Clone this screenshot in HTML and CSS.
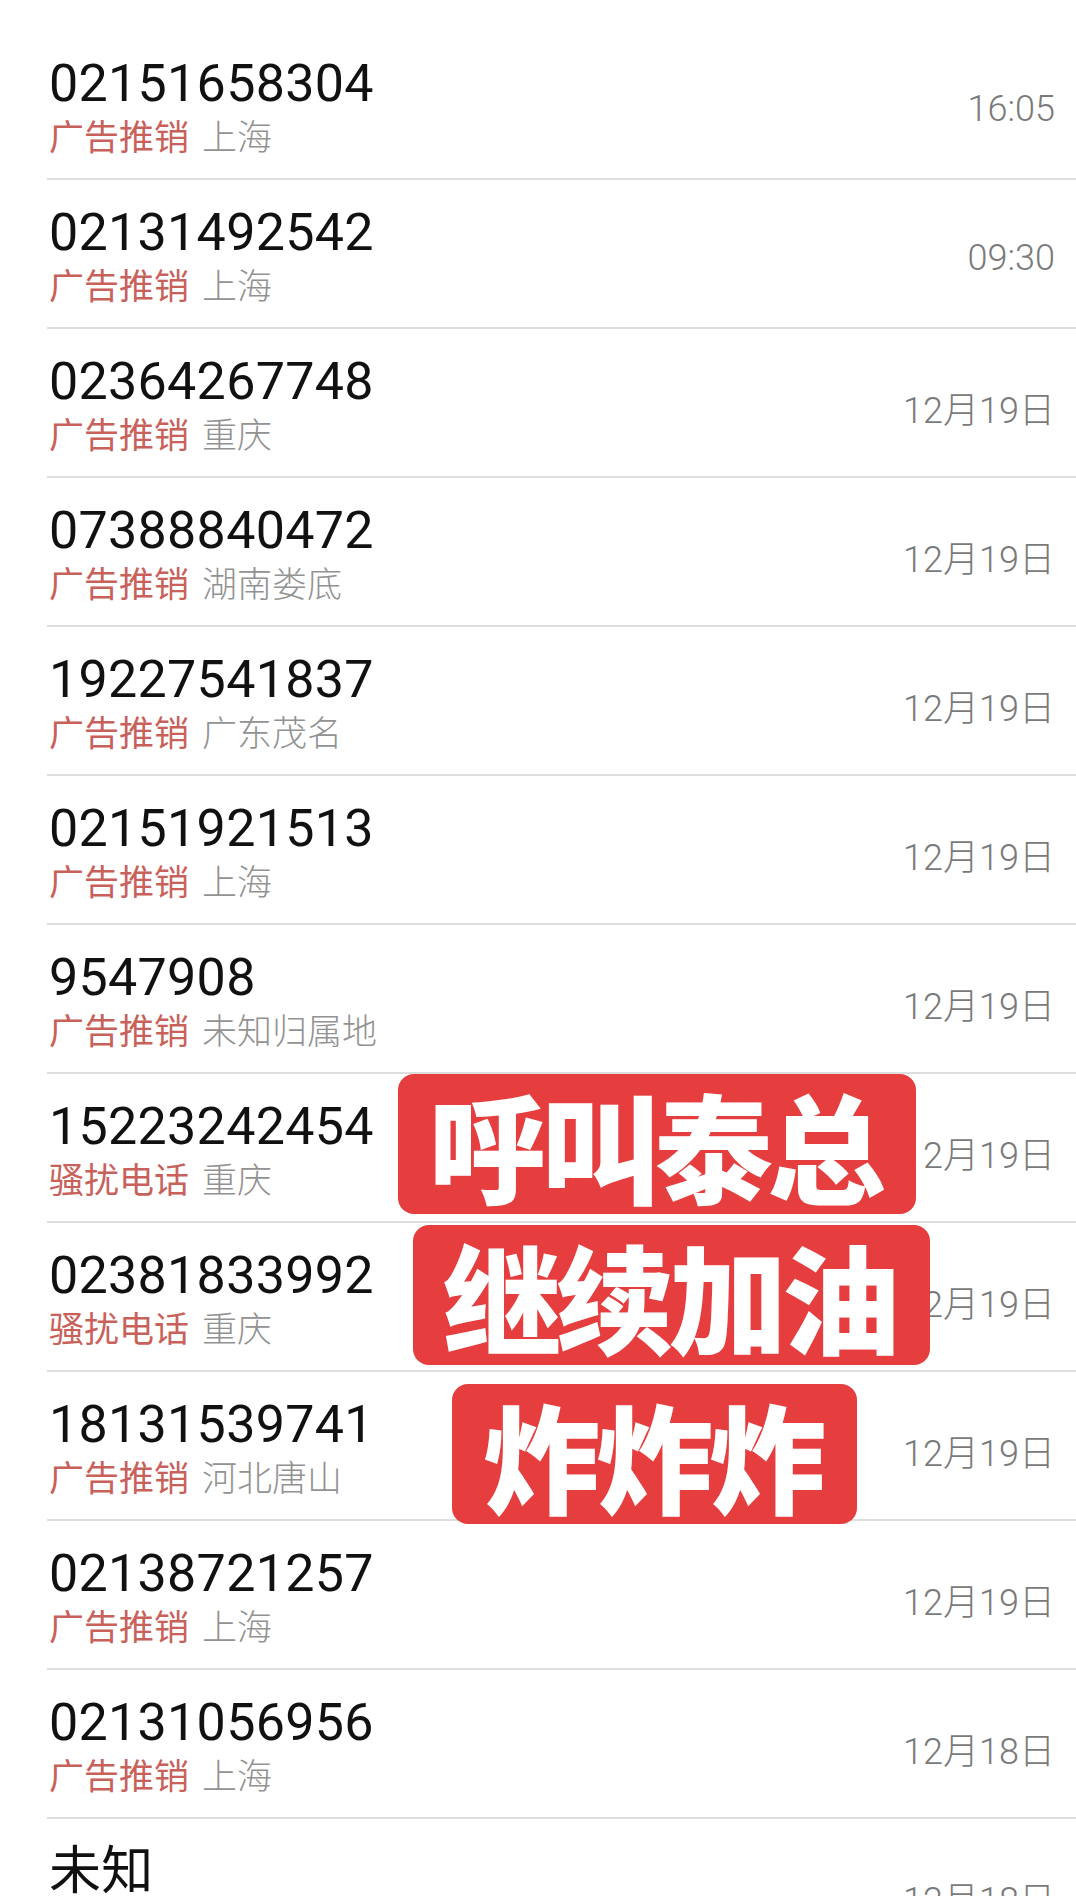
FILE: index.html
```html
<!DOCTYPE html>
<html lang="zh-CN">
<head>
    <meta charset="UTF-8">
    <meta name="viewport" content="width=device-width, initial-scale=1.0">
    <title>骚扰拦截</title>
    <link rel="stylesheet" href="styles.css">
</head>
<body>
    <div id="call-list">
        <div class="call-row">
            <div class="call-info">
                <div class="call-number">02151658304</div>
                <div class="call-sub"><span class="call-tag">广告推销</span><span class="call-place">上海</span></div>
            </div>
            <div class="call-time">16:05</div>
        </div>
        <div class="call-row">
            <div class="call-info">
                <div class="call-number">02131492542</div>
                <div class="call-sub"><span class="call-tag">广告推销</span><span class="call-place">上海</span></div>
            </div>
            <div class="call-time">09:30</div>
        </div>
        <div class="call-row">
            <div class="call-info">
                <div class="call-number">02364267748</div>
                <div class="call-sub"><span class="call-tag">广告推销</span><span class="call-place">重庆</span></div>
            </div>
            <div class="call-time">12月19日</div>
        </div>
        <div class="call-row">
            <div class="call-info">
                <div class="call-number">07388840472</div>
                <div class="call-sub"><span class="call-tag">广告推销</span><span class="call-place">湖南娄底</span></div>
            </div>
            <div class="call-time">12月19日</div>
        </div>
        <div class="call-row">
            <div class="call-info">
                <div class="call-number">19227541837</div>
                <div class="call-sub"><span class="call-tag">广告推销</span><span class="call-place">广东茂名</span></div>
            </div>
            <div class="call-time">12月19日</div>
        </div>
        <div class="call-row">
            <div class="call-info">
                <div class="call-number">02151921513</div>
                <div class="call-sub"><span class="call-tag">广告推销</span><span class="call-place">上海</span></div>
            </div>
            <div class="call-time">12月19日</div>
        </div>
        <div class="call-row">
            <div class="call-info">
                <div class="call-number">9547908</div>
                <div class="call-sub"><span class="call-tag">广告推销</span><span class="call-place">未知归属地</span></div>
            </div>
            <div class="call-time">12月19日</div>
        </div>
        <div class="call-row">
            <div class="call-info">
                <div class="call-number">15223242454</div>
                <div class="call-sub"><span class="call-tag">骚扰电话</span><span class="call-place">重庆</span></div>
            </div>
            <div class="call-time">12月19日</div>
        </div>
        <div class="call-row">
            <div class="call-info">
                <div class="call-number">02381833992</div>
                <div class="call-sub"><span class="call-tag">骚扰电话</span><span class="call-place">重庆</span></div>
            </div>
            <div class="call-time">12月19日</div>
        </div>
        <div class="call-row">
            <div class="call-info">
                <div class="call-number">18131539741</div>
                <div class="call-sub"><span class="call-tag">广告推销</span><span class="call-place">河北唐山</span></div>
            </div>
            <div class="call-time">12月19日</div>
        </div>
        <div class="call-row">
            <div class="call-info">
                <div class="call-number">02138721257</div>
                <div class="call-sub"><span class="call-tag">广告推销</span><span class="call-place">上海</span></div>
            </div>
            <div class="call-time">12月19日</div>
        </div>
        <div class="call-row">
            <div class="call-info">
                <div class="call-number">02131056956</div>
                <div class="call-sub"><span class="call-tag">广告推销</span><span class="call-place">上海</span></div>
            </div>
            <div class="call-time">12月18日</div>
        </div>
        <div class="call-row">
            <div class="call-info">
                <div class="call-number">未知</div>
                <div class="call-sub"><span class="call-tag">广告推销</span><span class="call-place">上海</span></div>
            </div>
            <div class="call-time">12月18日</div>
        </div>

        <!-- 贴纸 -->
        <div class="sticker sticker-1">呼叫泰总</div>
        <div class="sticker sticker-2">继续加油</div>
        <div class="sticker sticker-3">炸炸炸</div>
    </div>
</body>
</html>
```

FILE: styles.css
```css
body {
    margin: 0;
    padding: 31px 0 0 0;
    background-color: #ffffff;
    font-family: 'Roboto', 'Noto Sans CJK SC', sans-serif;
    overflow: hidden;
}

#call-list {
    position: relative;
}

.call-row {
    display: flex;
    justify-content: space-between;
    align-items: center;
    height: 147px;
    margin-left: 47px;
    padding-right: 21px;
    border-bottom: 2px solid #dedede;
}

.call-row:last-of-type {
    border-bottom: none;
}

.call-info {
    display: flex;
    flex-direction: column;
    align-self: flex-start;
    padding-top: 23px;
    padding-left: 2px;
}

.call-number {
    font-size: 52px;
    line-height: 60px;
    letter-spacing: 0.3px;
    color: #111111;
    font-family: 'Roboto', 'Noto Sans CJK SC', sans-serif;
}

.call-sub {
    font-family: 'Noto Sans CJK SC', sans-serif;
    font-size: 35px;
    line-height: 40px;
    margin-top: 1px;
    font-weight: 300;
}

.call-tag {
    color: #c9615b; /* 标签红色 */
    font-weight: 400;
    margin-right: 13px;
}

.call-place {
    color: #929292;
}

.call-time {
    font-family: 'Roboto', 'Noto Sans CJK SC', sans-serif;
    font-size: 36px;
    font-weight: 300;
    color: #7a7a7a;
    margin-top: 9px;
}

/* 红色贴纸 */
.sticker {
    position: absolute;
    height: 140px;
    line-height: 140px;
    background-color: #e63e3e;
    color: #ffffff;
    border-radius: 16px;
    font-family: 'Noto Sans CJK SC', sans-serif;
    font-weight: 900;
    font-size: 118px;
    letter-spacing: -5px;
    text-indent: -5px;
    white-space: nowrap;
    text-align: center;
}

.sticker-1 {
    top: 1043px;
    left: 398px;
    width: 518px;
}

.sticker-2 {
    top: 1194px;
    left: 413px;
    width: 517px;
}

.sticker-3 {
    top: 1353px;
    left: 452px;
    width: 405px;
}
```
